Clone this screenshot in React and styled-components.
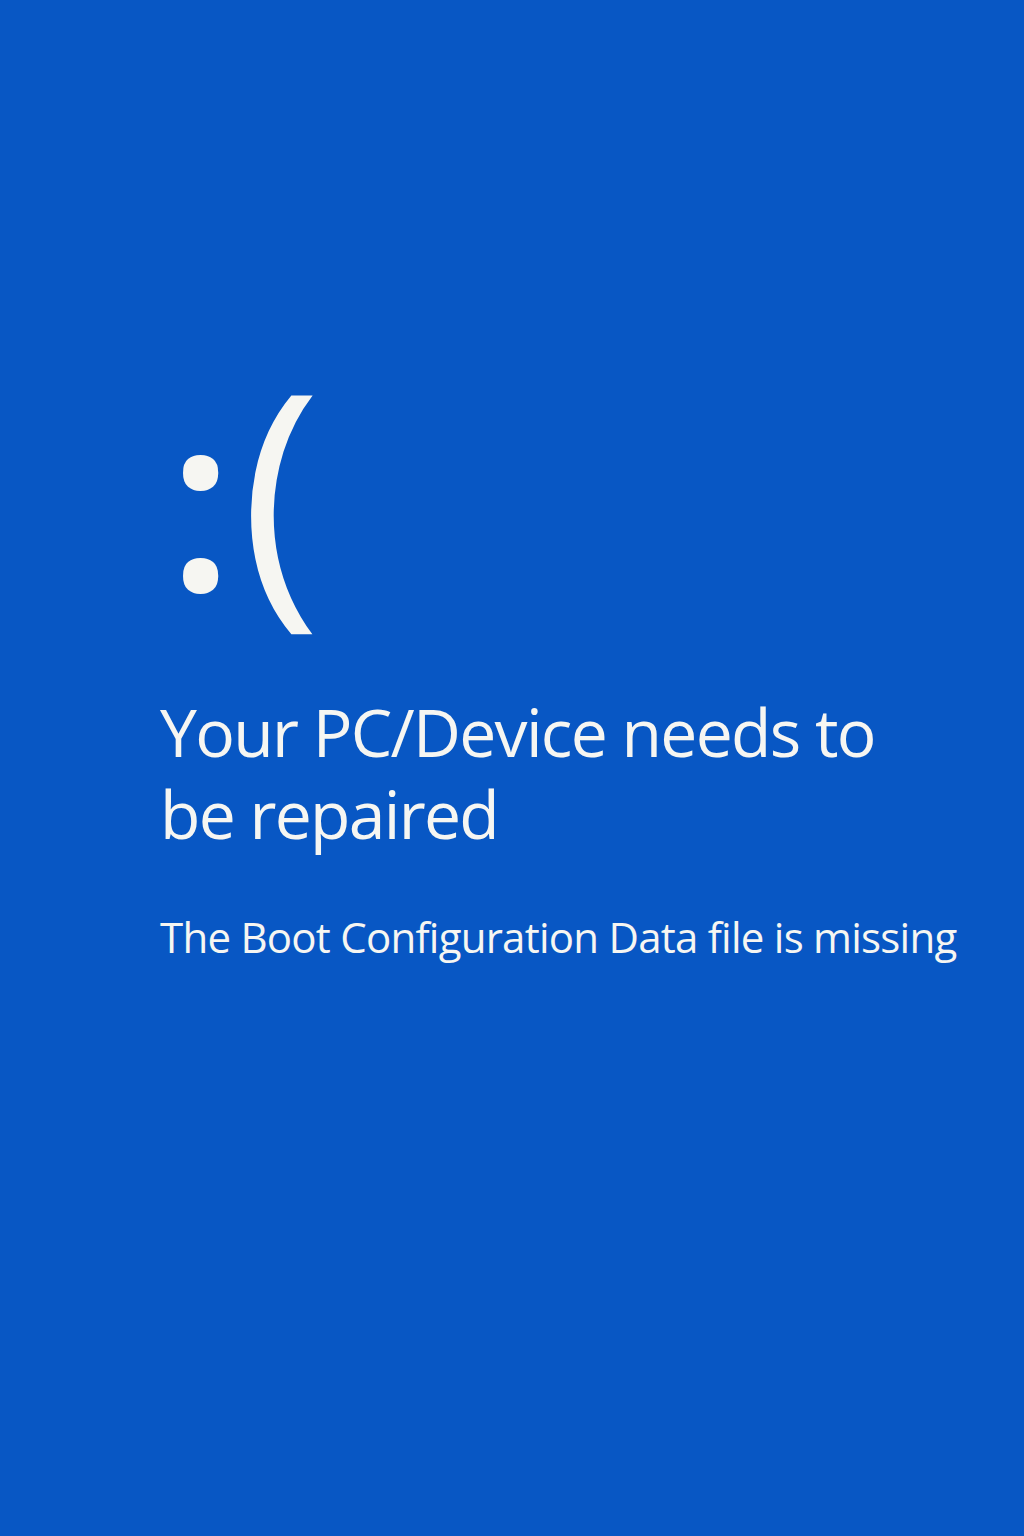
import React from 'react';
import styled, { createGlobalStyle } from 'styled-components';

const GlobalStyle = createGlobalStyle`
  html, body {
    margin: 0;
    padding: 0;
    background: #0857c4;
  }
`;

const Screen = styled.main`
  min-height: 1536px;
  box-sizing: border-box;
  background: #0857c4;
  color: #f6f6f2;
  font-family: "Open Sans", "Noto Sans", sans-serif;
  padding: 348px 40px 0 160px;
  display: flex;
  flex-direction: column;
`;

const Face = styled.div`
  font-size: 274px;
  font-weight: 400;
  line-height: 274px;
  margin-left: 7px;
`;

const Eyes = styled.span`
  font-size: 245px;
  font-weight: 580;
  line-height: 0;
  letter-spacing: 6px;
`;

const Title = styled.h1`
  margin: 68px 0 0;
  font-size: 66px;
  font-weight: 400;
  line-height: 82px;
  letter-spacing: -1.7px;
  max-width: 760px;
`;

const Detail = styled.p`
  margin: 58px 0 0;
  font-size: 42px;
  font-weight: 400;
  line-height: 50px;
  letter-spacing: -0.75px;
`;

export default function App() {
  return (
    <>
      <GlobalStyle />
      <Screen>
        <Face>
          <Eyes>:</Eyes>(
        </Face>
        <Title>Your PC/Device needs to be repaired</Title>
        <Detail>The Boot Configuration Data file is missing</Detail>
      </Screen>
    </>
  );
}
